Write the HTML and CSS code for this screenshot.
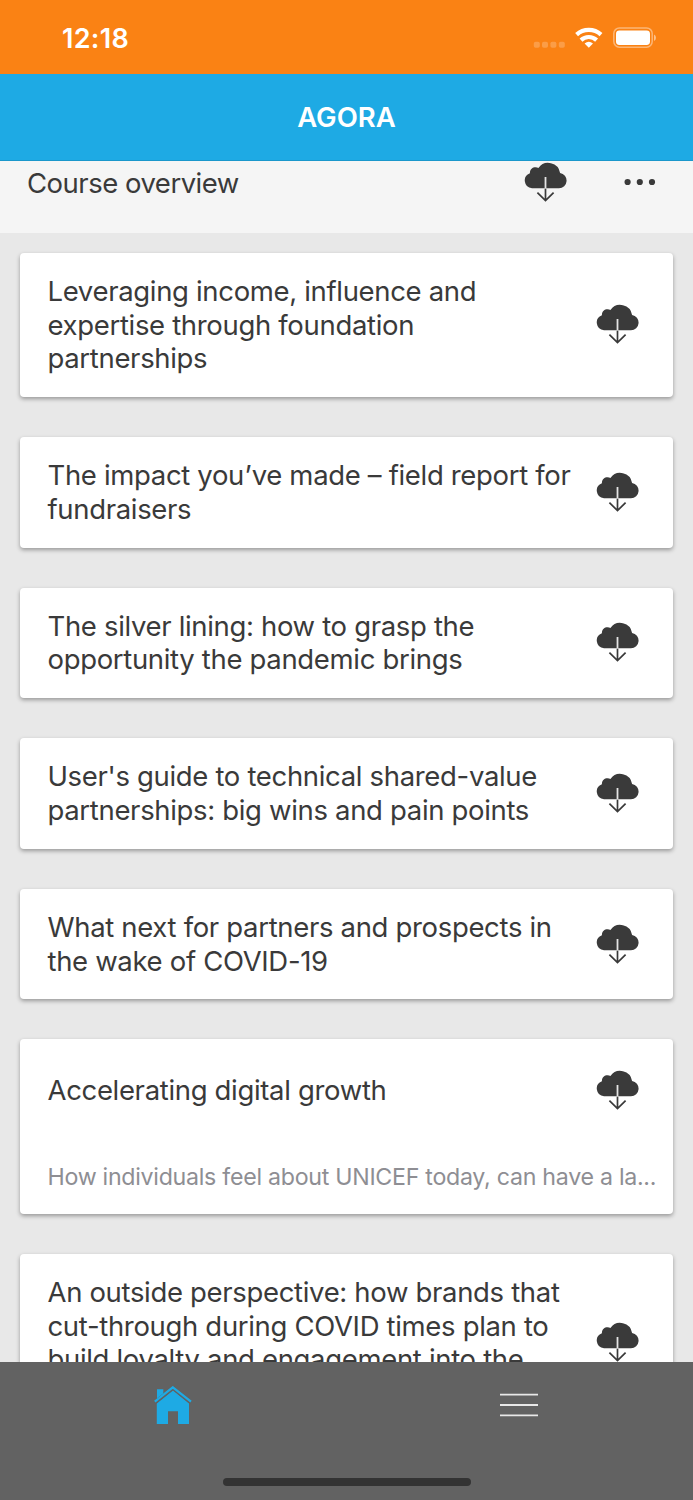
FILE: index.html
```html
<!DOCTYPE html>
<html lang="en">
<head>
    <meta charset="UTF-8">
    <meta name="viewport" content="width=device-width, initial-scale=1.0">
    <title>AGORA</title>
    <link rel="stylesheet" href="styles.css">
</head>
<body>
    <!-- shared icons -->
    <svg class="defs" width="0" height="0">
        <symbol id="cloud" viewBox="0 0 43 40">
            <path fill="#3a3a3a" d="M8 26.3A7.8 7.8 0 0 1 5.9 11.2C5.9 7.2 8.6 5.3 11.5 5.3Q13.3 5.3 14.4 6A12 12 0 0 1 36.1 11A7.7 7.7 0 0 1 35 26.3Z"/>
            <path fill="none" stroke="#e4e4e4" stroke-width="1.8" d="M21.5 15V26.3"/>
            <path fill="none" stroke="#3a3a3a" stroke-width="1.7" d="M21.5 26.8V38.5M13.4 30.6L21.5 38.6L29.6 30.6"/>
        </symbol>
    </svg>

    <div class="status-bar">
        <span class="time">12:18</span>
        <svg class="status-icons" width="124" height="24" viewBox="0 0 124 24">
            <g fill="#fff" fill-opacity=".22">
                <rect x="0.8" y="14.8" width="6" height="6" rx="1.8"/>
                <rect x="9" y="14.8" width="6" height="6" rx="1.8"/>
                <rect x="17.4" y="14.8" width="6" height="6" rx="1.8"/>
                <rect x="25.8" y="14.8" width="6" height="6" rx="1.8"/>
            </g>
            <g fill="none" stroke="#fff" stroke-width="4.2">
                <path d="M43.6 7.6A18 18 0 0 1 68 7.6"/>
                <path d="M48 13.1A11.4 11.4 0 0 1 63.6 13.1"/>
            </g>
            <path fill="#fff" d="M51.6 16.6Q55.8 12.9 60 16.6L55.8 20.8Z"/>
            <rect x="80.8" y="1" width="38.4" height="19.2" rx="5.6" fill="none" stroke="#fff" stroke-opacity=".42" stroke-width="1.5"/>
            <rect x="83" y="3.6" width="34" height="14.4" rx="3.4" fill="#fff"/>
            <path fill="#fff" fill-opacity=".5" d="M121 7.4Q123 8.4 123 10.7T121 14Z"/>
        </svg>
    </div>

    <div class="nav-bar"><span>AGORA</span></div>

    <div class="content">
        <div class="overview">
            <h1>Course overview</h1>
            <svg class="cloud"><use href="#cloud"/></svg>
            <svg class="more" width="32" height="8" viewBox="0 0 32 8" fill="#3a3a3a">
                <circle cx="3.6" cy="4" r="3.1"/>
                <circle cx="15.8" cy="4" r="3.1"/>
                <circle cx="28" cy="4" r="3.1"/>
            </svg>
        </div>

        <div class="courses">
            <div class="card">
                <h2>Leveraging income, influence and<br>expertise through foundation<br>partnerships</h2>
                <svg class="cloud"><use href="#cloud"/></svg>
            </div>
            <div class="card">
                <h2>The impact you’ve made – field report for<br>fundraisers</h2>
                <svg class="cloud"><use href="#cloud"/></svg>
            </div>
            <div class="card">
                <h2>The silver lining: how to grasp the<br>opportunity the pandemic brings</h2>
                <svg class="cloud"><use href="#cloud"/></svg>
            </div>
            <div class="card">
                <h2>User's guide to technical shared-value<br>partnerships: big wins and pain points</h2>
                <svg class="cloud"><use href="#cloud"/></svg>
            </div>
            <div class="card">
                <h2>What next for partners and prospects in<br>the wake of COVID-19</h2>
                <svg class="cloud"><use href="#cloud"/></svg>
            </div>
            <div class="card with-summary">
                <h2>Accelerating digital growth</h2>
                <svg class="cloud"><use href="#cloud"/></svg>
                <p>How individuals feel about UNICEF today, can have a la...</p>
            </div>
            <div class="card tall">
                <h2>An outside perspective: how brands that<br>cut-through during COVID times plan to<br>build loyalty and engagement into the</h2>
                <svg class="cloud"><use href="#cloud"/></svg>
            </div>
        </div>
    </div>

    <div class="tab-bar">
        <div class="tabs">
            <div class="tab">
                <svg width="38" height="39" viewBox="0 0 38 39" fill="#1eaae4">
                    <path d="M3 15V3.2H9.3V10Z"/>
                    <path d="M2.8 17.6L19 4.4L35 17.6V38H24V25.3H14V38H2.8Z"/>
                    <path d="M0.8 16.4L18.8 2L37 16.4" fill="none" stroke="#626262" stroke-width="3.4"/>
                    <path d="M0.8 15.6L18.8 1.3L37 15.6" fill="none" stroke="#1eaae4" stroke-width="2.2"/>
                </svg>
            </div>
            <div class="tab menu">
                <svg width="38" height="24" viewBox="0 0 38 24" stroke="#e8e8e8" stroke-width="1.8">
                    <path d="M0 1.7H38M0 12H38M0 22.3H38"/>
                </svg>
            </div>
        </div>
        <div class="home-indicator"></div>
    </div>
</body>
</html>
```
FILE: styles.css
```css
* {
    box-sizing: border-box;
}
body {
    font-family: Inter, "Liberation Sans", sans-serif;
    background-color: #e8e8e8;
    color: #3a3a3a;
    margin: 0;
    height: 1500px;
    display: flex;
    flex-direction: column;
    overflow: hidden;
}
.defs {
    display: none;
}
.status-bar {
    flex: none;
    height: 73.5px;
    background: #fa8214;
    color: #fff;
    display: flex;
    justify-content: space-between;
    align-items: flex-start;
    padding: 27px 36px 0 62px;
}
.time {
    font-size: 27px;
    font-weight: 600;
    line-height: 24px;
    letter-spacing: 0.3px;
}
.nav-bar {
    flex: none;
    height: 87.5px;
    background: #1eaae4;
    border-bottom: 1px solid #1a97cb;
    color: #fff;
    display: flex;
    justify-content: center;
    align-items: center;
    font-size: 27.5px;
    font-weight: 600;
}
.content {
    flex: 1;
    min-height: 0;
    overflow: hidden;
}
.overview {
    height: 72px;
    background: #f5f5f5;
    display: flex;
    align-items: flex-start;
    padding: 1px 37px 0 27px;
}
.overview h1 {
    flex: 1;
    margin: 4.5px 0 0;
    font-size: 27.5px;
    font-weight: 400;
    line-height: 33.5px;
    letter-spacing: -0.5px;
}
.more {
    margin: 16px 0 0 57px;
}
.cloud {
    flex: none;
    width: 43px;
    height: 40px;
}
.courses {
    display: flex;
    flex-direction: column;
    gap: 40px;
    padding: 20px 20.4px 0;
}
.card {
    flex: none;
    display: flex;
    align-items: center;
    padding: 22.2px 34px 21.4px 27.1px;
    background: #fff;
    border-radius: 4px;
    box-shadow: 0 2px 4px rgba(0, 0, 0, 0.35);
}
.card h2 {
    flex: 1;
    margin: 0;
    font-size: 27.5px;
    font-weight: 400;
    line-height: 33.5px;
    letter-spacing: -0.33px;
    white-space: nowrap;
}
.card .cloud {
    margin-top: -2px;
}
.with-summary {
    height: 174.5px;
    flex-wrap: wrap;
    align-content: flex-start;
    padding-top: 32.5px;
    padding-right: 16px;
}
.with-summary .cloud {
    margin-right: 18px;
}
.with-summary p {
    flex: 0 0 100%;
    margin: 53.5px 0 0;
    font-size: 23.2px;
    line-height: 29px;
    letter-spacing: -0.28px;
    color: #8e8e93;
    white-space: nowrap;
}
.tall {
    height: 177px;
}
.tall h2 {
    align-self: flex-start;
}
.tab-bar {
    flex: none;
    height: 138.5px;
    background: #626262;
    display: flex;
    flex-direction: column;
    justify-content: space-between;
    align-items: center;
    padding-bottom: 14px;
}
.tabs {
    display: flex;
    width: 100%;
    height: 87px;
}
.tab {
    flex: 1;
    display: flex;
    justify-content: center;
    align-items: center;
}
.menu {
    padding-right: 1px;
}
.home-indicator {
    width: 248px;
    height: 8px;
    border-radius: 4px;
    background: #333;
}
```
